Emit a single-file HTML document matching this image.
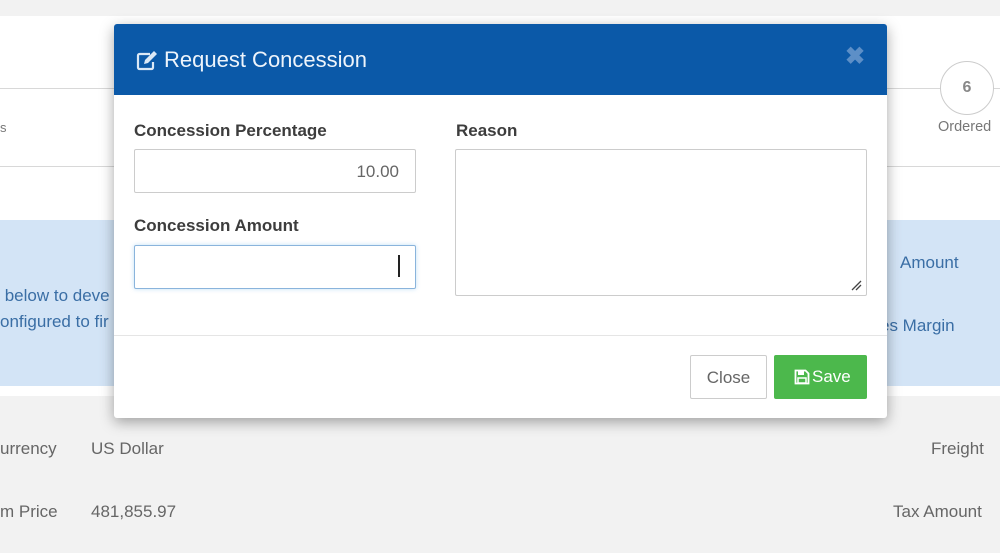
<!DOCTYPE html>
<html><head><style>
*{margin:0;padding:0;box-sizing:border-box}
body{width:1000px;height:553px;overflow:hidden;background:#f2f2f2;font-family:"Liberation Sans",sans-serif;position:relative}
.a{position:absolute}
</style></head><body>
<div class="a" style="left:0;top:16px;width:1000px;height:380px;background:#fff"></div>
<div class="a" style="left:0;top:88px;width:1000px;height:1px;background:#d8d8d8"></div>
<div class="a" style="left:0;top:166px;width:1000px;height:1px;background:#d8d8d8"></div>
<div class="a" style="left:0;top:120px;font-size:13px;color:#777">s</div>
<div class="a" style="left:940px;top:61px;width:54px;height:54px;border:1.5px solid #ccc;border-radius:50%;background:#fff;text-align:center;line-height:51px;font-size:16px;font-weight:bold;color:#888">6</div>
<div class="a" style="left:938px;top:119px;font-size:14.5px;color:#777">Ordered</div>
<div class="a" style="left:0;top:220px;width:1000px;height:166px;background:#d3e4f6"></div>
<div class="a" style="left:0;top:283px;font-size:17px;color:#3a6ea5;line-height:26px">&nbsp;below to deve<br>onfigured to fir</div>
<div class="a" style="left:900px;top:253px;font-size:17px;color:#3a6ea5">Amount</div>
<div class="a" style="left:880px;top:316px;font-size:17px;color:#3a6ea5">es Margin</div>
<div class="a" style="left:0;top:439px;font-size:17px;color:#666">urrency</div>
<div class="a" style="left:91px;top:439px;font-size:17px;color:#666">US Dollar</div>
<div class="a" style="left:0;top:502px;font-size:17px;color:#666">m Price</div>
<div class="a" style="left:91px;top:502px;font-size:17px;color:#666">481,855.97</div>
<div class="a" style="left:931px;top:439px;font-size:17px;color:#666">Freight</div>
<div class="a" style="left:893px;top:502px;font-size:17px;color:#666">Tax Amount</div>

<div class="a" style="left:114px;top:24px;width:773px;height:394px;background:#fff;border-radius:3px;box-shadow:0 4px 14px rgba(0,0,0,.35);overflow:hidden">
 <div class="a" style="left:0;top:0;width:773px;height:71px;background:#0b59a8"></div>
 <svg class="a" style="left:22px;top:27px" width="24" height="20" viewBox="0 0 24 20"><path d="M14 3H3.5A1.5 1.5 0 0 0 2 4.5v12A1.5 1.5 0 0 0 3.5 18h12a1.5 1.5 0 0 0 1.5-1.5V11" fill="none" stroke="#dbe8f6" stroke-width="2.2"/><path d="M8 13l1-4 9-9 3 3-9 9z" fill="#dbe8f6"/></svg>
 <div class="a" style="left:50px;top:23px;font-size:22px;color:#eef4fb">Request Concession</div>
 <div class="a" style="left:731px;top:18px;font-size:24px;font-weight:bold;color:#5d8fc7">✖</div>
 <div class="a" style="left:20px;top:97px;font-size:17px;font-weight:bold;color:#3d3d3d">Concession Percentage</div>
 <div class="a" style="left:20px;top:125px;width:282px;height:44px;border:1px solid #ccc;border-radius:2px;text-align:right;padding-right:16px;line-height:44px;font-size:17px;color:#666">10.00</div>
 <div class="a" style="left:20px;top:192px;font-size:17px;font-weight:bold;color:#3d3d3d">Concession Amount</div>
 <div class="a" style="left:20px;top:221px;width:282px;height:44px;border:1px solid #8ab4dc;border-radius:2px;box-shadow:0 0 5px rgba(102,175,233,.4)"></div>
 <div class="a" style="left:284px;top:231px;width:2px;height:22px;background:#222"></div>
 <div class="a" style="left:342px;top:97px;font-size:17px;font-weight:bold;color:#3d3d3d">Reason</div>
 <div class="a" style="left:341px;top:125px;width:412px;height:147px;border:1px solid #ccc;border-radius:2px"></div>
 <svg class="a" style="left:736px;top:255px" width="12" height="12"><path d="M2 11L11 2M6 11L11 6" stroke="#444" stroke-width="1.3"/></svg>
 <div class="a" style="left:0;top:311px;width:773px;height:1px;background:#e5e5e5"></div>
 <div class="a" style="left:576px;top:331px;width:77px;height:44px;border:1px solid #ccc;border-radius:2px;text-align:center;line-height:44px;font-size:17px;color:#666">Close</div>
 <div class="a" style="left:660px;top:331px;width:93px;height:44px;background:#4cb84c;border-radius:2px;color:#fff;font-size:17px;line-height:44px;padding-left:20px">
  <svg style="position:absolute;left:20px;top:14px" width="16" height="16" viewBox="0 0 16 16"><path d="M1.5 1.5h10l3 3v10h-13z" fill="none" stroke="#fff" stroke-width="1.8"/><rect x="4" y="2" width="6" height="4" fill="#fff"/><rect x="4" y="9" width="8" height="5" fill="none" stroke="#fff" stroke-width="1.5"/></svg>
  <span style="margin-left:18px">Save</span></div>
</div>
</body></html>
